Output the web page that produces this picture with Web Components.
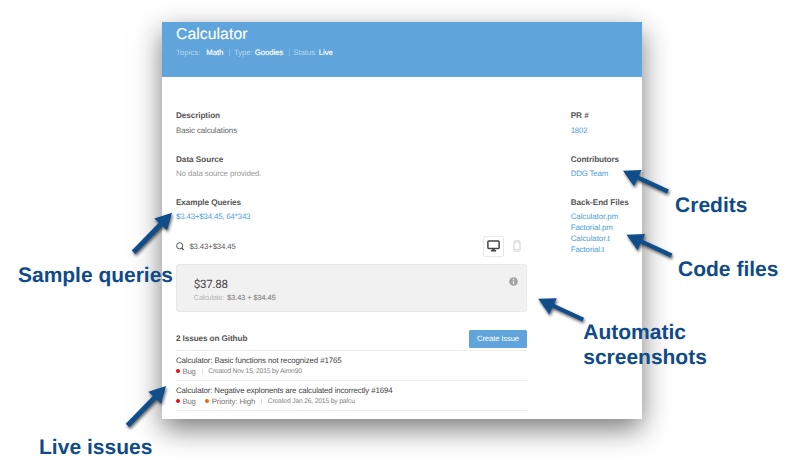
<!DOCTYPE html>
<html lang="en"><head><meta charset="utf-8"><title>Calculator</title>
<style>
html,body{margin:0;background:#fff;width:790px;height:472px;overflow:hidden;font-family:"Liberation Sans",Arial,sans-serif;text-rendering:geometricPrecision}
</style></head><body><annotated-page></annotated-page>
<script>
const define=(name,html,setup)=>customElements.define(name,class extends HTMLElement{
  constructor(){super();this.attachShadow({mode:'open'}).innerHTML=html;}
  connectedCallback(){if(setup)setup(this,this.shadowRoot);}
});

// Text run with a set width: tracking absorbs the difference.
define('fit-text','<style>:host{display:inline-block;white-space:nowrap;flex:none}span{display:inline-block}</style><span><slot></slot></span>',(el,root)=>{
  const w=+el.getAttribute('w'),s=root.querySelector('span');
  const n=el.textContent.length,now=s.getBoundingClientRect().width;
  s.style.letterSpacing=((w-now)/n)+'px';el.style.width=w+'px';
});

define('page-header',`<style>
:host{display:flex;flex-direction:column;box-sizing:border-box;height:55px;padding:3px 14px 0;background:#5fa4da;color:#fff;border-bottom:1px solid #6aabdd}
.title{font-size:15.7px;line-height:20px;height:20px;-webkit-text-stroke:.15px #fff}
.meta{display:flex;align-items:center;font-size:7.8px;line-height:12px;margin-top:1.6px;color:#b5d7f1}
b{font-weight:400;color:#fff;-webkit-text-stroke:.15px #fff}
i{width:1px;height:7px;background:#82bae5}
</style><div class="title"><fit-text w="71.5">Calculator</fit-text></div>
<div class="meta"><fit-text w="24.5">Topics:</fit-text><b style="margin-left:5.8px"><fit-text w="17">Math</fit-text></b>
<i style="margin:0 4px 0 5.7px"></i><fit-text w="18.5">Type:</fit-text><b style="margin-left:2.2px"><fit-text w="28.5">Goodies</fit-text></b>
<i style="margin:0 3.5px 0 5.7px"></i><fit-text w="23.5">Status:</fit-text><b style="margin-left:2px"><fit-text w="14">Live</fit-text></b></div>`);

define('info-section',`<style>
:host{display:block;font-size:7.9px;line-height:11px;color:var(--ink,#666)}
.h{font-weight:700;font-size:8.2px;line-height:14px;height:14px;color:#555;margin-bottom:1.5px}
.b{display:flex;flex-direction:column}
</style><div class="h"><slot name="head"></slot></div><div class="b"><slot></slot></div>`);

define('search-preview',`<style>
:host{display:flex;align-items:center;height:21px;margin-top:13.7px;font-size:7.8px;color:#555}
.mag{width:9px;height:9px;margin-right:4.4px}
.screen{box-sizing:border-box;width:21px;height:21px;border:1.5px solid #e9e9e9;border-radius:2px;margin-left:auto;display:grid;place-items:center;color:#444}
.phone{width:8px;height:12px;margin:0 6.2px 0 8.5px}
svg{display:block}
</style><svg class="mag" viewBox="0 0 9 9" fill="none" stroke="#555"><circle cx="3.7" cy="3.8" r="3.1"/><path d="M5.7 6 7.5 7.9" stroke-width="1.5"/></svg>
<fit-text w="46.3">$3.43+$34.45</fit-text>
<div class="screen"><svg width="13" height="12" viewBox="0 0 13 12"><rect x=".9" y="1" width="11.2" height="7.4" rx=".8" fill="none" stroke="#444" stroke-width="1.5"/><path d="M5.3 8.4h2.4v1.7h1.4v1.3H3.9v-1.3h1.4z" fill="#444"/></svg></div>
<svg class="phone" viewBox="0 0 8 12"><rect x="1" y=".8" width="6" height="10.4" rx="1" fill="none" stroke="#d2d2d2"/><path d="M1 2.2h6M1 9.5h6" stroke="#d2d2d2" stroke-width=".7"/></svg>`);

define('answer-card',`<style>
:host{display:flex;justify-content:space-between;box-sizing:border-box;height:48px;margin-top:7px;padding:11px 8px 0 16.8px;background:#f1f1f1;border:1px solid #e9e9e9;border-radius:3px}
.v{font:11.6px/17px Roboto,"Open Sans",sans-serif;color:#444;height:16px}
.c{display:flex;gap:3px;font-size:7.4px;line-height:11px;color:#b5b5b5;margin-top:0}
.c b{font-weight:400;color:#888;-webkit-text-stroke:.15px #888}
svg{width:9px;height:9px;margin-top:1.5px}
</style><div><div class="v"><fit-text w="34">$37.88</fit-text></div><div class="c"><fit-text w="30.4">Calculate:</fit-text><b><fit-text w="48.5">$3.43 + $34.45</fit-text></b></div></div>
<svg viewBox="0 0 9 9"><circle cx="4.5" cy="4.5" r="4.3" fill="#a3a3a3"/><path d="M4.5 1.8v1.2M4.5 3.8v3.1" stroke="#e9e9e9" stroke-width="1.2"/></svg>`);

define('issue-row',`<style>
:host{display:flex;flex-direction:column;box-sizing:border-box;height:30px;border-bottom:1px solid #ededed;padding-top:4px;font-size:7.9px;line-height:11px;color:#444}
</style><slot name="title"></slot><issue-meta><slot></slot></issue-meta>`);
define('issue-meta','<style>:host{display:flex;align-items:center;height:11px;color:#777}</style><slot></slot>');
define('issue-tag',`<style>:host{display:flex;align-items:center;color:#777;font-size:7.8px}
i{width:4px;height:4px;border-radius:50%;background:var(--dot);margin-right:2.4px}</style><i></i><slot></slot>`);
define('issue-date',`<style>:host{display:flex;align-items:center;color:#858585;font-size:6.8px;margin-left:6px}
i{width:1px;height:7px;background:#e2e2e2;margin-right:5.6px}</style><i></i><slot></slot>`);

define('issue-list',`<style>
:host{display:block;margin-top:18px}
.top{display:flex;align-items:center;justify-content:space-between;height:20px;border-bottom:1px solid #ededed;font-size:8.2px;color:#555;font-weight:700}
.btn{display:grid;place-items:center;box-sizing:border-box;width:58px;height:18px;margin-bottom:2px;border-radius:1.5px;background:#5fa4da;color:#fff;font:7.7px/11px "Liberation Sans",sans-serif}
.top>fit-text{margin-bottom:3px}
</style><div class="top"><fit-text w="71.3">2 Issues on Github</fit-text><div class="btn"><fit-text w="42">Create Issue</fit-text></div></div>
<issue-row><fit-text slot="title" w="165.5">Calculator: Basic functions not recognized #1765</fit-text>
<issue-tag style="--dot:#e30d18"><fit-text w="13.3">Bug</fit-text></issue-tag><issue-date><fit-text w="93.5">Created Nov 15, 2015 by Airon90</fit-text></issue-date></issue-row>
<issue-row><fit-text slot="title" w="216.5">Calculator: Negative explonents are calculated incorrectly #1694</fit-text>
<issue-tag style="--dot:#e30d18"><fit-text w="13.3">Bug</fit-text></issue-tag><issue-tag style="--dot:#f06218;margin-left:9.6px"><fit-text w="43.5">Priority: High</fit-text></issue-tag><issue-date><fit-text w="87">Created Jan 26, 2015 by pafcu</fit-text></issue-date></issue-row>`);

define('app-window',`<style>
:host{display:flex;flex-direction:column;width:480px;height:397px;background:#fff;box-shadow:0 10px 26px rgba(0,0,0,.52)}
.cols{display:grid;grid-template-columns:351px 1fr;column-gap:43.7px;padding:32.4px 0 0 14px}
.stack{display:flex;flex-direction:column;gap:16.7px}
.link{--ink:#4c9ddd}
</style><page-header></page-header><div class="cols"><main>
<div class="stack">
<info-section><fit-text slot="head" w="44">Description</fit-text><fit-text w="61">Basic calculations</fit-text></info-section>
<info-section style="--ink:#9a9a9a"><fit-text slot="head" w="47.3">Data Source</fit-text><fit-text w="85.3">No data source provided.</fit-text></info-section>
<info-section class="link"><fit-text slot="head" w="65">Example Queries</fit-text><fit-text w="74.3">$3.43+$34.45, 64*343</fit-text></info-section>
</div><search-preview></search-preview><answer-card></answer-card><issue-list></issue-list></main>
<aside class="stack">
<info-section class="link"><fit-text slot="head" w="18">PR #</fit-text><fit-text w="16.7">1802</fit-text></info-section>
<info-section class="link"><fit-text slot="head" w="48.3">Contributors</fit-text><fit-text w="37.5">DDG Team</fit-text></info-section>
<info-section class="link"><fit-text slot="head" w="58">Back-End Files</fit-text><fit-text w="47.5">Calculator.pm</fit-text><fit-text w="42">Factorial.pm</fit-text><fit-text w="39">Calculator.t</fit-text><fit-text w="33.5">Factorial.t</fit-text></info-section>
</aside></div>`);

define('call-out',`<style>:host{position:absolute;display:flex;flex-direction:column;color:#104b89;font-weight:700;font-size:21px;line-height:25px}</style><slot></slot>`);

define('arrow-layer',`<style>:host{position:absolute;inset:0;pointer-events:none}svg{display:block;filter:drop-shadow(1px 2.5px 1.8px rgba(0,0,0,.6))}</style>
<svg width="790" height="472" fill="#104d8b" stroke="#104d8b"><defs>
<g id="up"><path d="M0 0-17.7 5.7-5 17.6z" stroke="none"/><path d="M-9.5 9.8-38.5 39.5" stroke-width="5"/></g>
<g id="side"><path d="M0 0 18.6-.6 11 15.6z" stroke="none"/><path d="M13 6 45 20.8" stroke-width="4.2"/></g></defs>
<use href="#up" x="172" y="212.7"/><use href="#up" x="166" y="386"/>
<use href="#side" x="623" y="170.7"/><use href="#side" x="626.5" y="234.7"/><use href="#side" x="538.2" y="298.8"/></svg>`);

define('annotated-page',`<style>
:host{display:block;position:relative;box-sizing:border-box;width:790px;height:472px;padding:22px 0 0 162px}
</style><app-window></app-window><arrow-layer></arrow-layer>
<call-out style="left:18px;top:263px"><fit-text w="155">Sample queries</fit-text></call-out>
<call-out style="left:39px;top:435px"><fit-text w="113.5">Live issues</fit-text></call-out>
<call-out style="left:675px;top:193px"><fit-text w="72.5">Credits</fit-text></call-out>
<call-out style="left:678px;top:257px"><fit-text w="100.5">Code files</fit-text></call-out>
<call-out style="left:583.3px;top:320px"><fit-text w="102.7">Automatic</fit-text><fit-text w="123.5">screenshots</fit-text></call-out>`);
</script></body></html>
